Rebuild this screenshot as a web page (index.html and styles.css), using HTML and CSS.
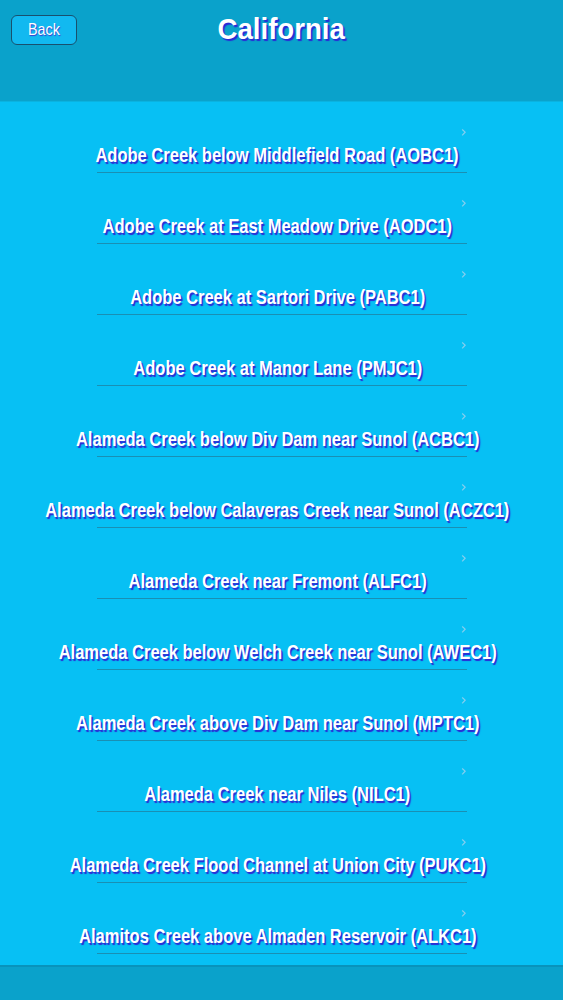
FILE: index.html
```html
<!DOCTYPE html>
<html>
<head>
<meta charset="utf-8">
<link rel="stylesheet" href="styles.css">
</head>
<body>
<div class="app">
  <header class="header">
    <button class="back"><span class="back-text">Back</span></button>
    <h1 class="title">California</h1>
  </header>
  <main class="list">
    <div class="row"><span class="label">Adobe Creek below Middlefield Road (AOBC1)</span><span class="chev">›</span></div>
    <div class="row"><span class="label">Adobe Creek at East Meadow Drive (AODC1)</span><span class="chev">›</span></div>
    <div class="row"><span class="label">Adobe Creek at Sartori Drive (PABC1)</span><span class="chev">›</span></div>
    <div class="row"><span class="label">Adobe Creek at Manor Lane (PMJC1)</span><span class="chev">›</span></div>
    <div class="row"><span class="label">Alameda Creek below Div Dam near Sunol (ACBC1)</span><span class="chev">›</span></div>
    <div class="row"><span class="label">Alameda Creek below Calaveras Creek near Sunol (ACZC1)</span><span class="chev">›</span></div>
    <div class="row"><span class="label">Alameda Creek near Fremont (ALFC1)</span><span class="chev">›</span></div>
    <div class="row"><span class="label">Alameda Creek below Welch Creek near Sunol (AWEC1)</span><span class="chev">›</span></div>
    <div class="row"><span class="label">Alameda Creek above Div Dam near Sunol (MPTC1)</span><span class="chev">›</span></div>
    <div class="row"><span class="label">Alameda Creek near Niles (NILC1)</span><span class="chev">›</span></div>
    <div class="row"><span class="label">Alameda Creek Flood Channel at Union City (PUKC1)</span><span class="chev">›</span></div>
    <div class="row"><span class="label">Alamitos Creek above Almaden Reservoir (ALKC1)</span><span class="chev">›</span></div>
  </main>
  <footer class="footer"></footer>
</div>
</body>
</html>
```
FILE: styles.css
```css
html, body {
  margin: 0;
  padding: 0;
}
body {
  font-family: "Liberation Sans", Arial, sans-serif;
  background: #07c0f4;
}
.app {
  width: 563px;
  height: 1000px;
  display: flex;
  flex-direction: column;
  overflow: hidden;
}
.header {
  height: 102px;
  flex: none;
  background: #0aa2cb;
  position: relative;
  display: flex;
  justify-content: center;
  border-bottom: 1px solid #0ab2e0;
  box-sizing: border-box;
}
.back {
  position: absolute;
  left: 11px;
  top: 15px;
  width: 66px;
  height: 30px;
  border: 1.5px solid #19506e;
  border-radius: 6px;
  background: #12b9f0;
  color: #fff;
  font-family: "Liberation Sans", Arial, sans-serif;
  font-size: 17px;
  padding: 0;
  display: flex;
  align-items: center;
  justify-content: center;
}
.back-text {
  display: inline-block;
  transform: scaleX(0.84);
  text-shadow: 1px 1px 1px #3a3ad0;
}
.title {
  margin: 11px 0 0;
  font-size: 30px;
  font-weight: bold;
  color: #fff;
  text-shadow: 2px 2px 1px #2a2ad6;
  line-height: 36px;
  transform: scaleX(0.92);
}
.list {
  flex: 1;
  overflow: hidden;
  display: flex;
  flex-direction: column;
  align-items: center;
}
.row {
  width: 370px;
  height: 71px;
  box-sizing: border-box;
  border-bottom: 1px solid #1a8fb3;
  position: relative;
  display: flex;
  align-items: flex-end;
  justify-content: center;
  flex: none;
}
.label {
  display: inline-block;
  white-space: nowrap;
  color: #fff;
  font-weight: bold;
  font-size: 21px;
  line-height: 24px;
  padding-bottom: 5px;
  margin-right: 8px;
  text-shadow: 2px 2px 1px #2a2ad6;
  transform: scaleX(0.786);
}
.chev {
  position: absolute;
  right: 0;
  top: 22px;
  color: #8fd0ee;
  font-family: "DejaVu Sans", sans-serif;
  font-size: 15px;
  line-height: 16px;
}
.footer {
  height: 35px;
  flex: none;
  background: #0aa2cb;
  border-top: 2px solid #0993bb;
  box-sizing: border-box;
}
```
